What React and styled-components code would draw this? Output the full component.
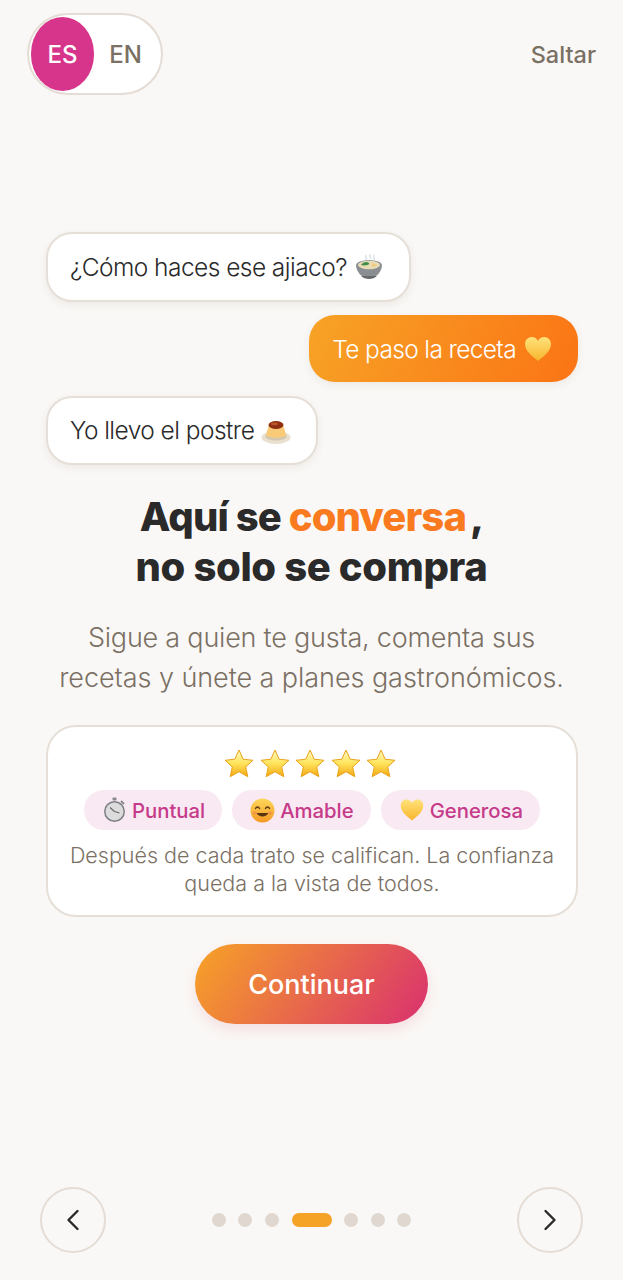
import React from "react";
import styled, {createGlobalStyle} from "styled-components";

const GlobalStyle = createGlobalStyle`
  * { box-sizing: border-box; }
  html, body { margin: 0; padding: 0; background: #faf8f6; }
  body { font-family: Inter, "Noto Sans", sans-serif; }
`

function BowlIcon() {
  return (
    <svg width="30" height="30" viewBox="0 0 30 30">
      <path d="M12 3c-1 2 1 3 0 5M16 2c-1 2 1 3 0 5M20 3c-1 2 1 3 0 5" fill="none" stroke="#d5dbe0" strokeWidth="1.2"/>
      <ellipse cx="15" cy="13.5" rx="13" ry="5.5" fill="#8b9095"/>
      <ellipse cx="15" cy="13" rx="11" ry="4.2" fill="#e9dcb4"/>
      <path d="M7 13c2-3 6-4 8-2 1 2-4 3-8 2z" fill="#3f8f4a"/>
      <path d="M17 11l6 2-4 2z" fill="#f2c879"/>
      <path d="M2 14c1 7 6 12 13 12s12-5 13-12c-3 3-8 4.500-13 4.500S5 17 2 14z" fill="#8a8e92"/>
      <path d="M7 24c2 2 5 3 8 3s6-1 8-3z" fill="#66696d"/>
    </svg>
  )
}

function HeartIcon({size = 30}) {
  return (
    <svg width={size} height={size} viewBox="0 0 30 30">
      <defs>
        <linearGradient id="heartFill" x1="0" y1="0" x2="0" y2="1">
          <stop offset="0" stopColor="#ffe27a"/>
          <stop offset="1" stopColor="#f7b52c"/>
        </linearGradient>
      </defs>
      <path d="M15 27C9 22 2 17 2 10c0-4 3-7 6.800-7 2.700 0 5 1.500 6.200 4 1.200-2.500 3.500-4 6.200-4C25 3 28 6 28 10c0 7-7 12-13 17z" fill="url(#heartFill)"/>
    </svg>
  )
}

function FlanIcon() {
  return (
    <svg width="30" height="30" viewBox="0 0 30 30">
      <ellipse cx="15" cy="22.500" rx="14.500" ry="6.500" fill="#e9e0cf"/>
      <ellipse cx="15" cy="21.500" rx="11" ry="4" fill="#d4c8b2"/>
      <path d="M8 10c0-3 14-3 14 0l3 9c0 5-20 5-20 0z" fill="#f9cb78"/>
      <ellipse cx="15" cy="10" rx="7.500" ry="4" fill="#8f2f12"/>
      <ellipse cx="13.500" cy="8.800" rx="3.500" ry="1.500" fill="#b9552a"/>
    </svg>
  )
}

function StarIcon() {
  return (
    <svg width="32" height="32" viewBox="0 0 32 32">
      <defs>
        <linearGradient id="starFill" x1="0" y1="0" x2="0" y2="1">
          <stop offset="0" stopColor="#fff8c4"/>
          <stop offset="0.5" stopColor="#ffe45c"/>
          <stop offset="1" stopColor="#f3a712"/>
        </linearGradient>
      </defs>
      <path d="M16 2l4.200 9.200 9.800 1.100-7.300 6.600 2.100 9.800L16 23.700l-8.800 5 2.100-9.800L2 12.300l9.800-1.100z" fill="url(#starFill)" stroke="#eaa21a" strokeWidth="1" strokeLinejoin="round"/>
    </svg>
  )
}

function WatchIcon() {
  return (
    <svg width="25" height="26" viewBox="0 0 25 26">
      <rect x="10.500" y="0.500" width="4" height="3" rx="1" fill="#8a8a8a"/>
      <path d="M19 4l3 3" stroke="#8a8a8a" strokeWidth="2"/>
      <circle cx="12.500" cy="14.500" r="10.500" fill="#7d8084"/>
      <circle cx="12.500" cy="14.500" r="9" fill="#dcdcdc"/>
      <path d="M12.500 14.500L8 10.500M12.500 14.500l5 1.500" stroke="#666" strokeWidth="1.100" fill="none"/>
    </svg>
  )
}

function SmileIcon() {
  return (
    <svg width="25" height="25" viewBox="0 0 25 25">
      <defs>
        <linearGradient id="smileFill" x1="0" y1="0" x2="0" y2="1">
          <stop offset="0" stopColor="#fdd75a"/>
          <stop offset="1" stopColor="#f59a23"/>
        </linearGradient>
      </defs>
      <circle cx="12.500" cy="12.500" r="12" fill="url(#smileFill)"/>
      <path d="M5.500 10.500c1-2 3-2 4 0M15.500 10.500c1-2 3-2 4 0" stroke="#5b3612" strokeWidth="1.500" fill="none" strokeLinecap="round"/>
      <path d="M6.500 15c2 4.500 10 4.500 12 0z" fill="#5b3612"/>
      <ellipse cx="5" cy="15" rx="2.500" ry="1.500" fill="#f08a4b" opacity="0.7"/>
      <ellipse cx="20" cy="15" rx="2.500" ry="1.500" fill="#f08a4b" opacity="0.7"/>
    </svg>
  )
}

function Chevron({flip}) {
  return (
    <svg width="14" height="22" viewBox="0 0 14 22" fill="none">
      <path d={flip ? "M2.500 2L11.500 11L2.500 20" : "M11.500 2L2.500 11L11.500 20"} stroke="#2a2a2a" strokeWidth="2.400" strokeLinecap="round" strokeLinejoin="round"/>
    </svg>
  )
}

function App() {
  return (
    <Screen>
      <GlobalStyle/>
      <Header>
        <LangToggle>
          <LangActive>ES</LangActive>
          <LangOption>EN</LangOption>
        </LangToggle>
        <Skip>Saltar</Skip>
      </Header>

      <Chat>
        <Bubble>¿Cómo haces ese ajiaco? <BowlIcon/></Bubble>
        <Bubble $mine>Te paso la receta <HeartIcon/></Bubble>
        <Bubble>Yo llevo el postre <FlanIcon/></Bubble>
      </Chat>

      <Title>
        <TextLine $spacing="-0.9px">Aquí se <Accent>conversa</Accent><Comma>,</Comma></TextLine>
        <TextLine $spacing="-0.35px">no solo se compra</TextLine>
      </Title>
      <Subtitle>
        <TextLine $spacing="-0.22px">Sigue a quien te gusta, comenta sus</TextLine>
        <TextLine $spacing="-0.06px">recetas y únete a planes gastronómicos.</TextLine>
      </Subtitle>

      <Card>
        <Stars>
          <StarIcon/><StarIcon/><StarIcon/><StarIcon/><StarIcon/>
        </Stars>
        <Chips>
          <Chip><WatchIcon/>Puntual</Chip>
          <Chip><SmileIcon/>Amable</Chip>
          <Chip><HeartIcon size={26}/>Generosa</Chip>
        </Chips>
        <CardText>
          Después de cada trato se califican. La confianza<br/>
          queda a la vista de todos.
        </CardText>
      </Card>

      <ContinueButton>Continuar</ContinueButton>

      <Footer>
        <NavButton><Chevron/></NavButton>
        <Dots>
          <Dot/><Dot/><Dot/><Dot $active/><Dot/><Dot/><Dot/>
        </Dots>
        <NavButton><Chevron flip/></NavButton>
      </Footer>
    </Screen>
  )
}

const Screen = styled.div`
  width: 623px;
  height: 1280px;
  display: flex;
  flex-direction: column;
  background: #faf8f6;
  overflow: hidden;
`

const Header = styled.div`
  display: flex;
  justify-content: space-between;
  align-items: center;
  padding: 13px 27px 0 27px;
`

const LangToggle = styled.div`
  width: 136px;
  height: 82px;
  padding: 2px;
  display: flex;
  align-items: center;
  background: #fff;
  border: 2px solid #e4dcd5;
  border-radius: 41px;
`

const LangActive = styled.div`
  width: 63px;
  height: 74px;
  display: flex;
  align-items: center;
  justify-content: center;
  background: #d6358b;
  color: #fff;
  border-radius: 32px / 37px;
  font-size: 24px;
  font-weight: 500;
`

const LangOption = styled.div`
  flex: 1;
  text-align: center;
  color: #7a7064;
  font-size: 24px;
  font-weight: 500;
  padding-right: 2px;
`

const Skip = styled.div`
  color: #7a7064;
  font-size: 23.500px;
  font-weight: 500;
`

const Chat = styled.div`
  display: flex;
  flex-direction: column;
  gap: 13.500px;
  padding: 0 45px 0 46px;
  margin-top: 137px;
`

const Bubble = styled.div`
  align-self: ${props => props.$mine ? 'flex-end' : 'flex-start'};
  height: ${props => props.$mine ? '67px' : '69.500px'};
  display: flex;
  align-items: center;
  gap: 7px;
  padding: ${props => props.$mine ? '0 25px 0 23px' : '0 25px 0 22px'};
  border-radius: 26px;
  font-size: 24.500px;
  font-weight: 350;
  letter-spacing: ${props => props.$mine ? '-0.65px' : '-0.55px'};
  color: ${props => props.$mine ? '#fff' : '#2a2a2a'};
  background: ${props => props.$mine ? 'linear-gradient(115deg, #f7a326, #fb7415)' : '#fff'};
  border: ${props => props.$mine ? 'none' : '2px solid #e6dfd8'};
  box-shadow: 0 3px 8px rgba(60, 40, 20, 0.07);
`

const Title = styled.h1`
  margin: 27px 0 0;
  text-align: center;
  font-size: 40px;
  line-height: 50px;
  font-weight: 800;
  color: #2a2a2a;
`

const TextLine = styled.span`
  display: block;
  letter-spacing: ${props => props.$spacing};
`

const Accent = styled.span`
  color: #f97a1f;
`

const Comma = styled.span`
  margin-left: 4px;
`

const Subtitle = styled.p`
  margin: 26px 0 0;
  text-align: center;
  font-size: 27px;
  line-height: 40px;
  font-weight: 350;
  color: #7a7064;
`

const Card = styled.div`
  width: 532px;
  height: 192px;
  margin: 27px 0 0 46px;
  padding: 21px 0 0;
  display: flex;
  flex-direction: column;
  align-items: center;
  background: #fff;
  border: 2px solid #e6dfd8;
  border-radius: 30px;
`

const Stars = styled.div`
  display: flex;
  gap: 3.500px;
  height: 32px;
  margin-right: 4px;
`

const Chips = styled.div`
  display: flex;
  gap: 10px;
  margin-top: 10px;
`

const Chip = styled.div`
  height: 40px;
  display: flex;
  align-items: center;
  gap: 5px;
  padding: 0 17px 0 18px;
  background: #f9e9f2;
  color: #c63a8a;
  border-radius: 20px;
  font-size: 20.300px;
  font-weight: 500;
`

const CardText = styled.p`
  margin: 11px 0 0;
  text-align: center;
  font-size: 21.500px;
  line-height: 28px;
  font-weight: 350;
  letter-spacing: 0;
  color: #7a7064;
`

const ContinueButton = styled.button`
  align-self: center;
  width: 233px;
  height: 80px;
  margin-top: 27px;
  border: none;
  border-radius: 40px;
  background: linear-gradient(125deg, #f7a326, #d9306f);
  box-shadow: 0 6px 14px rgba(214, 80, 100, 0.14);
  color: #fff;
  font-family: inherit;
  font-size: 27px;
  font-weight: 500;
`

const Footer = styled.div`
  margin-top: auto;
  padding: 0 40px 27px;
  display: flex;
  align-items: center;
  justify-content: space-between;
`

const NavButton = styled.div`
  width: 66px;
  height: 66px;
  display: flex;
  align-items: center;
  justify-content: center;
  border: 2px solid #e4dcd5;
  border-radius: 50%;
`

const Dots = styled.div`
  display: flex;
  align-items: center;
  gap: 12.670px;
`

const Dot = styled.div`
  width: ${props => props.$active ? '40px' : '14px'};
  height: 14px;
  border-radius: 7px;
  background: ${props => props.$active ? '#f5a327' : '#e0d8d0'};
`

export default App;
